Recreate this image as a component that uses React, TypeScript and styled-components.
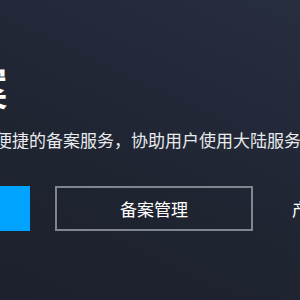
import styled, {createGlobalStyle} from 'styled-components';

const GlobalStyle = createGlobalStyle`
  html, body {
    margin: 0;
    padding: 0;
    background: #1f2431;
  }
  body {
    font-family: "Noto Sans CJK SC", "Noto Sans", sans-serif;
    overflow: hidden;
  }
`;

const Hero = styled.section`
  position: relative;
  width: 300px;
  height: 300px;
  overflow: hidden;
  background: linear-gradient(205deg, #272e3e 0%, #222837 35%, #1f2431 60%, #1d212d 100%);
`;

const Content = styled.div`
  display: flex;
  flex-direction: column;
  align-items: flex-start;
  margin-left: -158px;
  padding-top: 54px;
  width: 900px;
`;

const Title = styled.h1`
  margin: 0;
  font-size: 46px;
  line-height: 62px;
  font-weight: 500;
  color: #ffffff;
  white-space: nowrap;
`;

const Desc = styled.p`
  margin: 12px 0 0;
  font-size: 17px;
  line-height: 24px;
  color: #e8eaee;
  white-space: nowrap;
`;

const Actions = styled.div`
  display: flex;
  align-items: center;
  gap: 25px;
  margin-top: 34px;
`;

const Button = styled.a<{$primary?: boolean; $w: number}>`
  display: flex;
  align-items: center;
  justify-content: center;
  box-sizing: border-box;
  width: ${p => p.$w}px;
  height: 45px;
  font-size: 17px;
  color: #ffffff;
  text-decoration: none;
  background: ${p => (p.$primary ? '#00a3ff' : 'transparent')};
  border: 2px solid ${p => (p.$primary ? '#00a3ff' : '#80858f')};
`;

const TextLink = styled.a`
  margin-left: 14px;
  font-size: 17px;
  color: #ffffff;
  text-decoration: none;
  white-space: nowrap;
`;

export default function App() {
    return (
        <>
            <GlobalStyle/>
            <Hero>
                <Content>
                    <Title>ICP备案</Title>
                    <Desc>为您提供免费快速、便捷的备案服务，协助用户使用大陆服务器合规上线</Desc>
                    <Actions>
                        <Button $primary $w={188} href="#">开始备案</Button>
                        <Button $w={198} href="#">备案管理</Button>
                        <TextLink href="#">产品文档</TextLink>
                    </Actions>
                </Content>
            </Hero>
        </>
    );
}
